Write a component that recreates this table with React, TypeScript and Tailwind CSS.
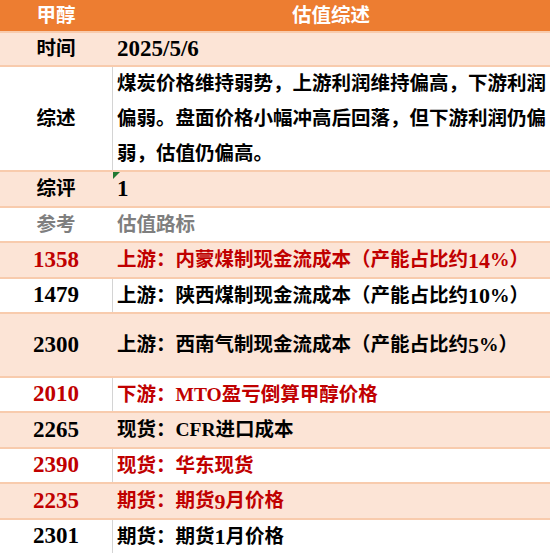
import React from "react";

type Row = {
  left: string;
  right: React.ReactNode;
  h: string;
  peach?: boolean;
  tone?: "black" | "red" | "grey";
  divider?: boolean;
  mark?: boolean;
};

const FONT = "font-['Liberation_Serif','Noto_Sans_CJK_SC',serif]";

// digit runs are drawn a bit larger, like the wide numerals of the sheet font
function Num({ text }: { text: string }) {
  const parts = text.split(/(\d+)/);
  return (
    <>
      {parts.map((p, i) =>
        /^\d+$/.test(p) ? (
          <span key={i} className="text-[22px]">
            {p}
          </span>
        ) : (
          <React.Fragment key={i}>{p}</React.Fragment>
        )
      )}
    </>
  );
}

const TONE = {
  black: "text-black",
  red: "text-[#C00000]",
  grey: "text-[#7F7F7F]",
};

const ROWS: Row[] = [
  { left: "时间", right: <span className="text-[23px]">2025/5/6</span>, h: "h-[34px]", peach: true },
  {
    left: "综述",
    right: (
      <div className="leading-[35px] whitespace-nowrap">
        煤炭价格维持弱势，上游利润维持偏高，下游利润
        <br />
        偏弱。盘面价格小幅冲高后回落，但下游利润仍偏
        <br />
        弱，估值仍偏高。
      </div>
    ),
    h: "h-[105px]",
    divider: true,
  },
  { left: "综评", right: <span className="text-[23px]">1</span>, h: "h-[36px]", peach: true, mark: true },
  { left: "参考", right: "估值路标", h: "h-[35px]", tone: "grey" },
  { left: "1358", right: <Num text="上游：内蒙煤制现金流成本（产能占比约14%）" />, h: "h-[36px]", peach: true, tone: "red" },
  { left: "1479", right: <Num text="上游：陕西煤制现金流成本（产能占比约10%）" />, h: "h-[35px]", divider: true },
  { left: "2300", right: <Num text="上游：西南气制现金流成本（产能占比约5%）" />, h: "h-[64px]", peach: true },
  { left: "2010", right: "下游：MTO盈亏倒算甲醇价格", h: "h-[35px]", tone: "red", divider: true },
  { left: "2265", right: "现货：CFR进口成本", h: "h-[36px]", peach: true },
  { left: "2390", right: "现货：华东现货", h: "h-[35px]", tone: "red", divider: true },
  { left: "2235", right: <Num text="期货：期货9月价格" />, h: "h-[36px]", peach: true, tone: "red" },
  { left: "2301", right: <Num text="期货：期货1月价格" />, h: "h-[35px]", divider: true },
];

export default function App() {
  return (
    <div className={`w-[550px] h-[553px] overflow-hidden bg-white font-bold text-[19.5px] ${FONT}`}>
      <div className="flex h-[33px] bg-[#ED7D31] border-b-2 border-[#F8CBAD] text-white">
        <div className="w-[112px] flex items-center justify-center">甲醇</div>
        <div className="flex-1 flex items-center justify-center">估值综述</div>
      </div>

      {ROWS.map((r) => {
        const digits = /^\d+$/.test(r.left);
        return (
          <div
            key={r.left}
            className={`flex ${r.h} border-b-2 border-[#F8CBAD] ${r.peach ? "bg-[#FCE4D6]" : "bg-white"} ${TONE[r.tone ?? "black"]}`}
          >
            <div className={`w-[112px] flex items-center justify-center ${digits ? "text-[23px]" : ""}`}>
              {r.left}
            </div>
            <div
              className={`relative flex-1 flex items-center pl-[4px] ${r.divider ? "border-l border-[#D4D4D4]" : "border-l border-transparent"}`}
            >
              {r.mark && (
                <span className="absolute left-0 top-0 w-0 h-0 border-t-[7px] border-r-[7px] border-t-[#217A34] border-r-transparent" />
              )}
              {r.right}
            </div>
          </div>
        );
      })}
    </div>
  );
}
